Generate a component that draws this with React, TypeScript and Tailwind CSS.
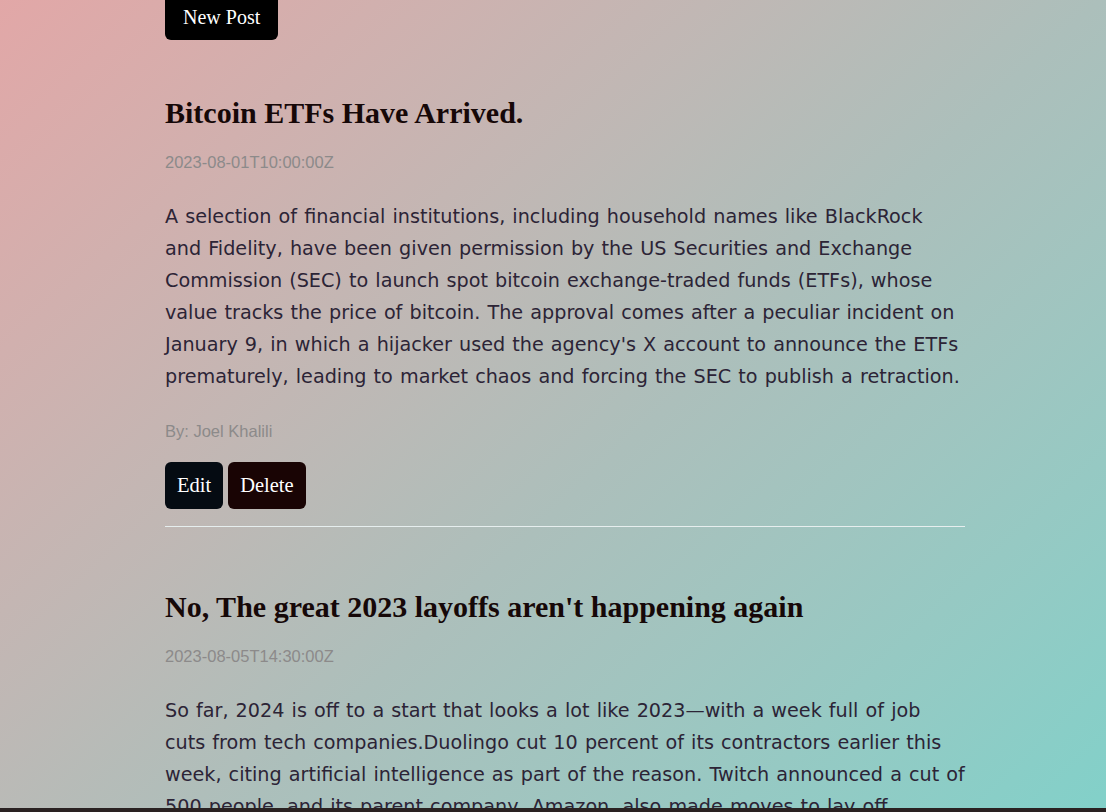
import React from 'react';

interface Post {
  id: number;
  title: string;
  date: string;
  body: string;
  author: string;
}

const posts: Post[] = [
  {
    id: 1,
    title: 'Bitcoin ETFs Have Arrived.',
    date: '2023-08-01T10:00:00Z',
    body:
      "A selection of financial institutions, including household names like BlackRock and Fidelity, have been given permission by the US Securities and Exchange Commission (SEC) to launch spot bitcoin exchange-traded funds (ETFs), whose value tracks the price of bitcoin. The approval comes after a peculiar incident on January 9, in which a hijacker used the agency's X account to announce the ETFs prematurely, leading to market chaos and forcing the SEC to publish a retraction.",
    author: 'Joel Khalili',
  },
  {
    id: 2,
    title: "No, The great 2023 layoffs aren't happening again",
    date: '2023-08-05T14:30:00Z',
    body:
      'So far, 2024 is off to a start that looks a lot like 2023\u2014with a week full of job cuts from tech companies.Duolingo cut 10 percent of its contractors earlier this week, citing artificial intelligence as part of the reason. Twitch announced a cut of 500 people, and its parent company, Amazon, also made moves to lay off hundreds of employees across Prime Video and MGM Studios.',
    author: 'Amanda Hoover',
  },
];

const App: React.FC = () => {
  return (
    <div className="min-h-screen bg-gradient-to-br from-[#e2a7a7] via-[#acbfbb] to-[#72d5cd]">
      <main className="w-[800px] ml-[165px] -mt-[5px] pb-10">
        <button className="bg-black text-white rounded-md px-[18px] py-[10px] text-[20px] leading-[25px] font-['Liberation_Serif',serif]">
          New Post
        </button>

        {posts.map(post => (
          <article key={post.id} className="pt-[55px] pb-[17px] mb-[7px] border-b border-[#e6eeee]">
            <h2 className="font-['Liberation_Serif',serif] font-bold text-[30px] leading-[36px] text-[#160808]">
              {post.title}
            </h2>
            <p className="mt-[21px] font-['Liberation_Sans',sans-serif] text-[16.5px] leading-[20px] text-[#8c8a8a]">
              {post.date}
            </p>
            <p className="mt-[29px] [word-spacing:1px] font-['DejaVu_Sans',sans-serif] text-[19.2px] leading-[32px] text-[#2c2436]">
              {post.body}
            </p>
            <p className="mt-[28px] font-['Liberation_Sans',sans-serif] text-[16.5px] leading-[20px] text-[#8c8a8a]">
              By: {post.author}
            </p>
            <div className="flex gap-[5px] mt-[21px]">
              <button className="bg-[#050b12] text-white rounded-md px-3 py-[11px] text-[20.5px] leading-[25px] font-['Liberation_Serif',serif]">
                Edit
              </button>
              <button className="bg-[#190404] text-white rounded-md px-3 py-[11px] text-[20.5px] leading-[25px] font-['Liberation_Serif',serif]">
                Delete
              </button>
            </div>
          </article>
        ))}
      </main>
      <div className="fixed bottom-0 left-0 right-0 h-1 bg-[#2a2222]" />
    </div>
  );
};

export default App;
